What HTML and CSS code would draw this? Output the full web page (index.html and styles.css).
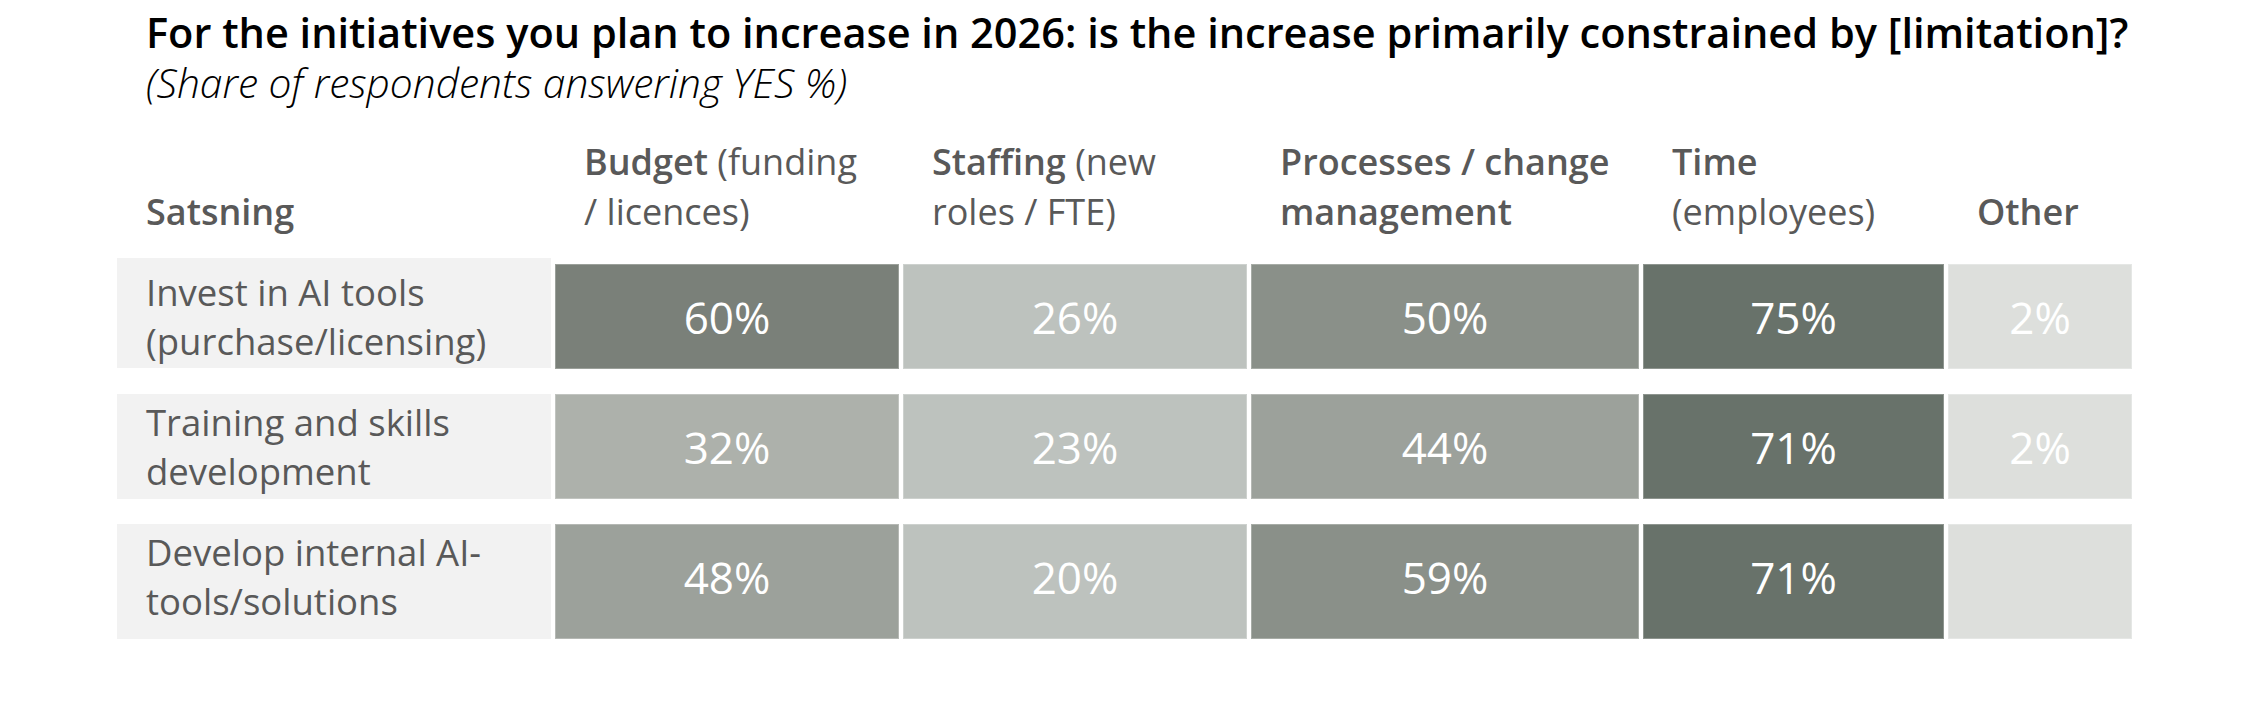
FILE: index.html
```html
<!DOCTYPE html>
<html lang="en">
<head>
<meta charset="utf-8">
<title>Constraints</title>
<link rel="stylesheet" href="styles.css">
</head>
<body>
<div class="page">
  <header class="heading">
    <h1 class="title">For the initiatives you plan to increase in 2026: is the increase primarily constrained by [limitation]?</h1>
    <p class="subtitle">(Share of respondents answering YES %)</p>
  </header>
  <div class="table">
    <div class="th"><b>Satsning</b></div>
    <div class="th"><b>Budget</b> (funding<br>/ licences)</div>
    <div class="th"><b>Staffing</b> (new<br>roles / FTE)</div>
    <div class="th"><b>Processes / change<br>management</b></div>
    <div class="th"><b>Time</b><br>(employees)</div>
    <div class="th"><b>Other</b></div>

    <div class="label first">Invest in AI tools (purchase/licensing)</div>
    <div class="cell first c60">60%</div>
    <div class="cell first c26">26%</div>
    <div class="cell first c50">50%</div>
    <div class="cell first c75">75%</div>
    <div class="cell first c02">2%</div>

    <div class="label">Training and skills development</div>
    <div class="cell c32">32%</div>
    <div class="cell c23">23%</div>
    <div class="cell c44">44%</div>
    <div class="cell c75">71%</div>
    <div class="cell c02">2%</div>

    <div class="label last">Develop internal AI-tools/solutions</div>
    <div class="cell last c44">48%</div>
    <div class="cell last c23">20%</div>
    <div class="cell last c50">59%</div>
    <div class="cell last c75">71%</div>
    <div class="cell last c02"></div>
  </div>
</div>
</body>
</html>
```
FILE: styles.css
```css
html, body {
  margin: 0;
  padding: 0;
  background: #ffffff;
}

.page {
  width: 2250px;
  height: 724px;
  font-family: "Open Sans", "Liberation Sans", sans-serif;
  color: #595959;
}

.heading {
  padding: 8px 0 0 146px;
}

.title {
  margin: 0;
  font-size: 41.5px;
  line-height: 48px;
  font-weight: 600;
  color: #000000;
  white-space: nowrap;
}

.subtitle {
  margin: 1px 0 0;
  font-size: 40.7px;
  line-height: 50px;
  font-style: italic;
  font-weight: 300;
  color: #000000;
}

.table {
  margin: 3px 0 0 117px;
  display: grid;
  grid-template-columns: 434px 344px 344px 388px 301px 184px;
  grid-template-rows: 123px 111px 105px 115px;
  column-gap: 4px;
  row-gap: 25px;
}

.th {
  align-self: end;
  margin-bottom: -4px;
  padding-left: 29px;
  font-size: 36px;
  line-height: 50px;
  white-space: nowrap;
}

.th b {
  font-weight: 600;
}

.label {
  background: #f2f2f2;
  display: flex;
  align-items: center;
  padding: 0 20px 0 29px;
  font-size: 36.5px;
  line-height: 49px;
}

.label.first {
  margin-bottom: 1px;
  padding-top: 8px;
}

.cell {
  display: flex;
  align-items: center;
  justify-content: center;
  color: #ffffff;
  font-size: 44px;
  box-shadow: inset 0 0 0 1px rgba(255, 255, 255, 0.25);
}

.cell.first {
  margin-top: 6px;
}

.last {
  padding-bottom: 10px;
}

.c60 { background: #7a8079; }
.c26 { background: #bdc2be; }
.c50 { background: #8a9089; }
.c75 { background: #68726a; }
.c02 { background: #dddfdc; }
.c32 { background: #adb1ab; }
.c23 { background: #bdc2be; }
.c44 { background: #9ca19b; }
```
